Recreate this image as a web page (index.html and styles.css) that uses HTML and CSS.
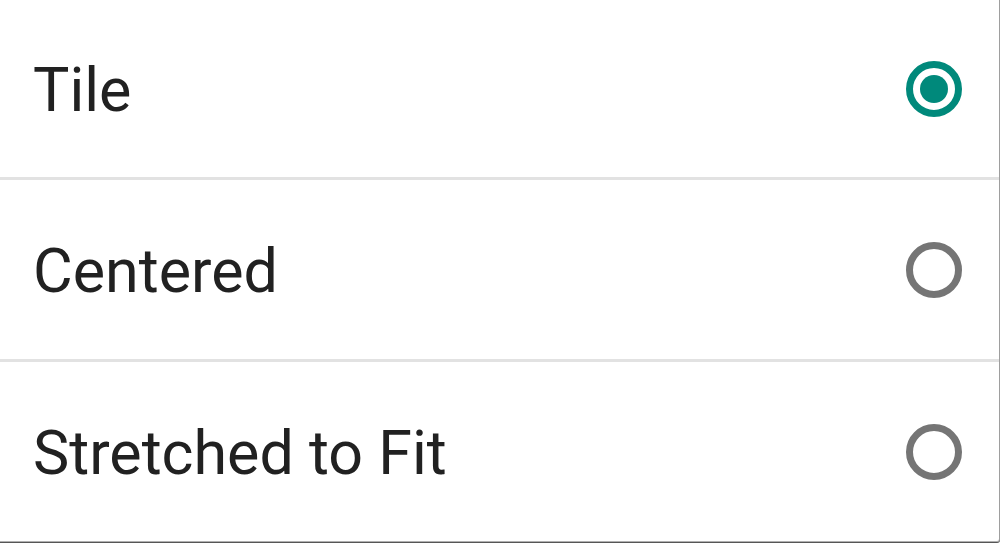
FILE: index.html
```html
<!DOCTYPE html>
<html>
<head>
<meta charset="utf-8">
<link rel="stylesheet" href="styles.css">
</head>
<body>
<div class="dialog">
  <div class="option first">
    <span class="label">Tile</span>
    <span class="radio checked"></span>
  </div>
  <div class="option">
    <span class="label">Centered</span>
    <span class="radio"></span>
  </div>
  <div class="option last">
    <span class="label">Stretched to Fit</span>
    <span class="radio"></span>
  </div>
</div>
</body>
</html>
```
FILE: styles.css
```css
html, body {
  margin: 0;
  padding: 0;
  background: #ffffff;
}
body {
  width: 1001px;
  height: 543px;
  overflow: hidden;
}
.dialog {
  width: 1000px;
  height: 542px;
  border-right: 1px solid #9e9e9e;
  border-bottom: 1px solid #b0b0b0;
  border-bottom-right-radius: 3px;
  box-shadow: 0 1px 0 #555555;
  background: #ffffff;
  display: flex;
  flex-direction: column;
  box-sizing: border-box;
  font-family: Roboto, "Noto Sans", sans-serif;
}
.option {
  height: 179px;
  display: flex;
  align-items: center;
  justify-content: space-between;
  padding: 0 37px 0 33px;
  border-bottom: 3px solid #e2e2e2;
  flex: none;
}
.option.first {
  height: 177px;
}
.option.last {
  border-bottom: none;
  height: 179px;
}
.label {
  font-size: 61px;
  color: #212121;
  line-height: 1;
  padding-top: 4px;
}
.radio {
  width: 42px;
  height: 42px;
  border: 7px solid #757575;
  border-radius: 50%;
  position: relative;
  flex: none;
}
.radio.checked {
  border-color: #00897b;
}
.radio.checked::after {
  content: "";
  position: absolute;
  left: 7px;
  top: 7px;
  width: 28px;
  height: 28px;
  border-radius: 50%;
  background: #00897b;
}
```
